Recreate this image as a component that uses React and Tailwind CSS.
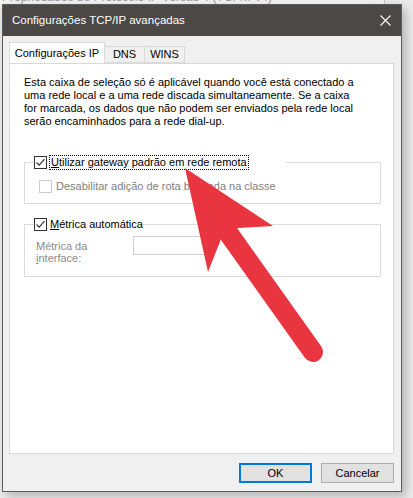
import React from 'react'

const font = { fontFamily: '"Liberation Sans", Arial, sans-serif' }

const Check = ({ checked, disabled }) => (
  <span
    className={
      'flex h-[13px] w-[13px] shrink-0 items-center justify-center border bg-white ' +
      (disabled ? 'border-[#cccccc]' : 'border-[#333333]')
    }
  >
    {checked && (
      <svg width="11" height="11" viewBox="0 0 11 11">
        <path d="M1.5 5.5 L4.2 8.2 L9.5 2.2" fill="none" stroke="#333" strokeWidth="1.2" />
      </svg>
    )}
  </span>
)

const Arrow = () => (
  <svg className="pointer-events-none absolute left-0 top-0" width="413" height="498" viewBox="0 0 413 498">
    <polygon points="185,168 273,226 238,228 221,239 208,272" fill="#e9353f" />
    <line x1="229" y1="234" x2="313" y2="352" stroke="#e9353f" strokeWidth="20" strokeLinecap="round" />
  </svg>
)

export default function App() {
  return (
    <div className="relative h-[498px] w-[413px] overflow-hidden bg-[#ececec] text-[11px] text-black" style={font}>
      {/* janela de trás */}
      <div className="absolute left-0 top-[-9px] h-[13px] w-[385px] whitespace-nowrap border-r border-[#c8c8c8] bg-[#f4f4f4] pl-[2px] text-[12px] leading-[13px] text-[#9a9a9a]">
        Propriedades de Protocolo IP Versão 4 (TCP/IPv4)
        <span className="absolute right-[8px] top-0">✕</span>
      </div>

      <div className="relative ml-[2px] mt-[4px] flex h-[488px] w-[400px] flex-col border border-[#5c5c5c] bg-[#f0f0f0] shadow-[4px_4px_10px_rgba(0,0,0,0.25)]">
        <div className="flex h-[31px] items-center justify-between bg-[#4b4845] pl-[9px] pr-[10px] text-[11.5px] text-white">
          <span>Configurações TCP/IP avançadas</span>
          <svg width="11" height="11" viewBox="0 0 11 11">
            <path d="M0.5 0.5 L10.5 10.5 M10.5 0.5 L0.5 10.5" stroke="#fff" strokeWidth="1.1" />
          </svg>
        </div>

        <div className="flex flex-col px-[6px] pt-[7px]">
          <div className="relative z-10 flex h-[20px] items-end">
            <div className="flex h-[21px] w-[96px] items-center justify-center border border-b-0 border-[#d9d9d9] bg-white">
              Configurações IP
            </div>
            <div className="flex h-[17px] w-[40px] items-center justify-center border border-l-0 border-[#d9d9d9] bg-[#f0f0f0]">
              DNS
            </div>
            <div className="flex h-[17px] w-[40px] items-center justify-center border border-l-0 border-[#d9d9d9] bg-[#f0f0f0]">
              WINS
            </div>
          </div>

          <div className="h-[391px] w-[385px] border border-[#d9d9d9] bg-white">
            <p className="pl-[14px] pt-[12px] leading-[13px]">
              Esta caixa de seleção só é aplicável quando você está conectado a
              <br />
              uma rede local e a uma rede discada simultaneamente. Se a caixa
              <br />
              for marcada, os dados que não podem ser enviados pela rede local
              <br />
              serão encaminhados para a rede dial-up.
            </p>

            <div className="ml-[14px] mt-[34px] h-[42px] w-[357px] border border-[#dcdcdc]">
              <div className="-mt-[7px] ml-[9px] flex h-[13px] w-[252px] items-center bg-white">
                <Check checked />
                <span className="ml-[2px] border border-dotted border-black px-[1px] leading-[13px]">
                  <span className="underline">U</span>tilizar gateway padrão em rede remota
                </span>
              </div>
              <div className="ml-[14px] mt-[9px] flex items-center gap-[4px] text-[#7f7f7f]">
                <Check disabled />
                <span>Desabilitar adição de rota baseada na classe</span>
              </div>
            </div>

            <div className="ml-[14px] mt-[20px] h-[53px] w-[357px] border border-[#dcdcdc]">
              <div className="-mt-[7px] ml-[9px] flex h-[13px] w-[106px] items-center gap-[3px] bg-white">
                <Check checked />
                <span className="whitespace-nowrap">
                  <span className="underline">M</span>étrica automática
                </span>
              </div>
              <div className="ml-[11px] mt-[5px] flex items-start text-[#8a8a8a]">
                <div className="w-[97px] pt-[4px] leading-[12px]">
                  Métrica da
                  <br />
                  <span className="underline">i</span>nterface:
                </div>
                <div className="h-[19px] w-[78px] border border-[#cfcfcf] bg-white" />
              </div>
            </div>
          </div>

          <div className="mt-[9px] flex justify-end gap-[9px] pr-[1px]">
            <button className="flex h-[20px] w-[73px] items-center justify-center border-2 border-[#0078d7] bg-[#e1e1e1]">
              OK
            </button>
            <button className="flex h-[20px] w-[73px] items-center justify-center border border-[#adadad] bg-[#e1e1e1]">
              Cancelar
            </button>
          </div>
        </div>
      </div>

      <Arrow />
    </div>
  )
}
